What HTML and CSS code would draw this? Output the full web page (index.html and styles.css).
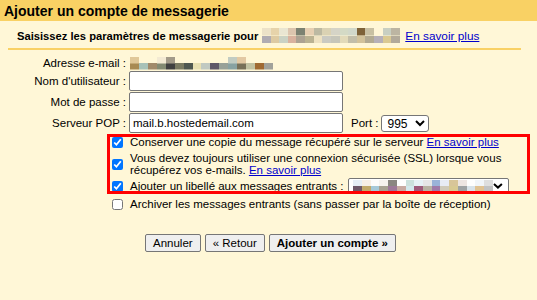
FILE: index.html
```html
<!DOCTYPE html>
<html lang="fr">
<head>
    <meta charset="UTF-8">
    <meta name="viewport" content="width=device-width, initial-scale=1.0">
    <title>Ajouter un compte de messagerie</title>
    <link rel="stylesheet" href="styles.css">
</head>
<body>
    <div class="titlebar">Ajouter un compte de messagerie</div>

    <div class="intro">
        Saisissez les paramètres de messagerie pour
        <span class="mosaic mosaic-intro"></span>
        <a href="#">En savoir plus</a>
    </div>

    <!-- Paramètres du serveur -->
    <div class="fields">
        <label>Adresse e-mail :</label>
        <div><span class="mosaic mosaic-email"></span></div>

        <label for="user">Nom d'utilisateur :</label>
        <div><input type="text" id="user" class="field"></div>

        <label for="pass">Mot de passe :</label>
        <div><input type="password" id="pass" class="field"></div>

        <label for="pop">Serveur POP :</label>
        <div class="pop-row">
            <input type="text" id="pop" class="field" value="mail.b.hostedemail.com">
            <label for="port" class="port-label">Port :</label>
            <select id="port" class="port"><option>995</option><option>110</option></select>
        </div>
    </div>

    <!-- Options -->
    <div class="options">
        <div class="highlight">
            <label class="opt">
                <input type="checkbox" checked>
                <span>Conserver une copie du message récupéré sur le serveur <a href="#">En savoir plus</a></span>
            </label>
            <label class="opt">
                <input type="checkbox" checked>
                <span class="wrap">Vous devez toujours utiliser une connexion sécurisée (SSL) lorsque vous récupérez vos e-mails. <a href="#">En savoir plus</a></span>
            </label>
            <label class="opt">
                <input type="checkbox" checked>
                <span>Ajouter un libellé aux messages entrants :</span>
                <span class="fake-select">
                    <span class="mosaic mosaic-label"></span>
                    <svg width="10" height="6" viewBox="0 0 10 6"><path d="M1 1 L5 4.6 L9 1" fill="none" stroke="#000" stroke-width="2"/></svg>
                </span>
            </label>
        </div>
        <label class="opt">
            <input type="checkbox">
            <span>Archiver les messages entrants (sans passer par la boîte de réception)</span>
        </label>
    </div>

    <div class="buttons">
        <button type="button">Annuler</button>
        <button type="button">« Retour</button>
        <button type="button" class="primary">Ajouter un compte »</button>
    </div>
</body>
</html>
```

FILE: styles.css
```css
body {
    margin: 0;
    background-color: #fff7d7;
    font-family: "Liberation Sans", Arial, sans-serif;
    font-size: 11.5px;
    color: #000;
}
a {
    color: #0000cc;
}

/* Barre de titre */
.titlebar {
    background-color: #f9d164;
    height: 21px;
    line-height: 22px;
    padding-left: 4px;
    font-size: 14px;
    font-weight: bold;
}
.intro {
    display: flex;
    align-items: center;
    margin: 0 16px 0 8px;
    padding: 7px 0 5px 9px;
    border-bottom: 2px solid #f9d164;
    font-size: 11.2px;
    font-weight: bold;
}
.intro a {
    font-weight: normal;
    font-size: 11.8px;
}

/* Texte flouté (pixels) */
.mosaic {
    display: inline-block;
    background-repeat: no-repeat;
    background-size: 100% 50%;
    background-position: 0 0, 0 100%;
}
.mosaic-intro {
    width: 138px;
    height: 15px;
    margin: 0 5px 0 4px;
    background-image:
        linear-gradient(90deg, #ece2c8 0 6.25%, #e6d3aa 0 12.5%, #e9e6d2 0 18.75%, #dcc5ae 0 25%, #7c8272 0 31.25%, #e6cfb2 0 37.5%, #bcb9a2 0 43.75%, #dad2b3 0 50%, #d5d4c7 0 56.25%, #d4dac5 0 62.5%, #d1d8ca 0 68.75%, #7e6238 0 75%, #c8c0a3 0 81.25%, #fff6d8 0 87.5%, #c8cfc2 0 93.75%, #bcb5a2 0),
        linear-gradient(90deg, #b0acb2 0 6.25%, #ddcaa2 0 12.5%, #cad2c3 0 18.75%, #d9b29e 0 25%, #aca292 0 31.25%, #bab292 0 37.5%, #eee2c2 0 43.75%, #cacac2 0 50%, #c6c6ba 0 56.25%, #e2dab9 0 62.5%, #c2bea9 0 68.75%, #d2c29a 0 75%, #b2aa92 0 81.25%, #b6b0b8 0 87.5%, #dac992 0 93.75%, #b2aa9a 0);
}
.mosaic-email {
    width: 143px;
    height: 13px;
    margin-left: 1px;
    vertical-align: middle;
    background-image:
        linear-gradient(90deg, #e0c898 0 6.25%, transparent 0 18.75%, #f3ead3 0 25%, #a39b89 0 31.25%, transparent 0 68.75%, #c2ccc2 0 75%, #e3c9a3 0 81.25%, transparent 0),
        linear-gradient(90deg, #a88a52 0 6.25%, #a8c2b8 0 12.5%, #a18a6a 0 18.75%, #838a72 0 25%, #404040 0 31.25%, #7a7a62 0 37.5%, #4f5750 0 43.75%, #e8e0b2 0 50%, #c0c9c1 0 56.25%, #5f5868 0 62.5%, #98a198 0 68.75%, #88a2a2 0 75%, #787058 0 81.25%, #c2c2a2 0 87.5%, #a06a32 0 93.75%, #a2a29a 0);
}
.mosaic-label {
    width: 142px;
    height: 12px;
    background-image:
        linear-gradient(90deg, #e6eef5 0 6.25%, #f7efe6 0 12.5%, #fdfcfa 0 18.75%, #f6f2ee 0 25%, #8a8680 0 31.25%, #fefefe 0 37.5%, #cbe1dd 0 43.75%, #e6f1f5 0 50%, #e6e6e6 0 56.25%, #9ab3d8 0 62.5%, #e8ecf4 0 68.75%, #d8c599 0 75%, #ede5e2 0 81.25%, #fefefe 0 87.5%, #f1f5f9 0 93.75%, #dedede 0),
        linear-gradient(90deg, #6e5868 0 6.25%, #c2a96a 0 12.5%, #a6c9d8 0 18.75%, #a8a292 0 25%, #9d7898 0 31.25%, #c8aaa2 0 37.5%, #d2e8ec 0 43.75%, #9e5a7a 0 50%, #b8b2a2 0 56.25%, #9f7aa8 0 62.5%, #d0cab9 0 68.75%, #d8c992 0 75%, #9ea2a4 0 81.25%, #d8e2e9 0 87.5%, #e0c292 0 93.75%, #c2c2c2 0);
}

/* Formulaire */
.fields {
    display: grid;
    grid-template-columns: 118px auto;
    column-gap: 3px;
    row-gap: 1px;
    align-items: center;
    margin: 6px 0 0 8px;
}
.fields > label {
    text-align: right;
    white-space: nowrap;
}
.fields > div {
    display: flex;
    align-items: center;
    min-height: 14px;
}
.field {
    box-sizing: border-box;
    width: 214px;
    height: 20px;
    margin: 0;
    padding: 0 3px;
    border: 1px solid #767676;
    border-radius: 2px;
    background: #fff;
    font: inherit;
}
.port-label {
    margin: 0 3px 0 8px;
}
.port {
    box-sizing: border-box;
    width: 48px;
    height: 17px;
    margin: 0;
    padding: 0 0 0 1px;
    border: 1px solid #767676;
    border-radius: 3px;
    background: #fff;
    font: inherit;
    font-size: 12px;
}

/* Cases à cocher */
.options {
    display: flex;
    flex-direction: column;
    gap: 2px;
    margin: 1px 0 0 112px;
}
.highlight {
    position: relative;
    display: flex;
    flex-direction: column;
    gap: 2px;
}
.highlight::before {
    content: "";
    position: absolute;
    top: 0;
    bottom: 0;
    left: -5px;
    width: 423px;
    box-sizing: border-box;
    border: 3px solid #f00;
    pointer-events: none;
}
.opt {
    display: flex;
    align-items: center;
    gap: 7px;
    min-height: 16px;
    line-height: 12px;
}
.opt input {
    width: 11px;
    height: 11px;
    margin: 0;
    flex: none;
}
.wrap {
    max-width: 395px;
}
.fake-select {
    display: flex;
    align-items: center;
    justify-content: space-between;
    box-sizing: border-box;
    width: 161px;
    height: 16px;
    margin-left: -3px;
    padding: 0 5px 0 4px;
    border: 1px solid #767676;
    border-radius: 2px;
    background: #fff;
}

/* Boutons */
.buttons {
    display: flex;
    gap: 4px;
    margin: 22px 0 0 145px;
}
button {
    height: 18px;
    padding: 0 7px;
    border: 1px solid #767676;
    border-radius: 2px;
    background-color: #efefef;
    font: inherit;
    color: #000;
    cursor: pointer;
}
button.primary {
    font-weight: bold;
}
```
